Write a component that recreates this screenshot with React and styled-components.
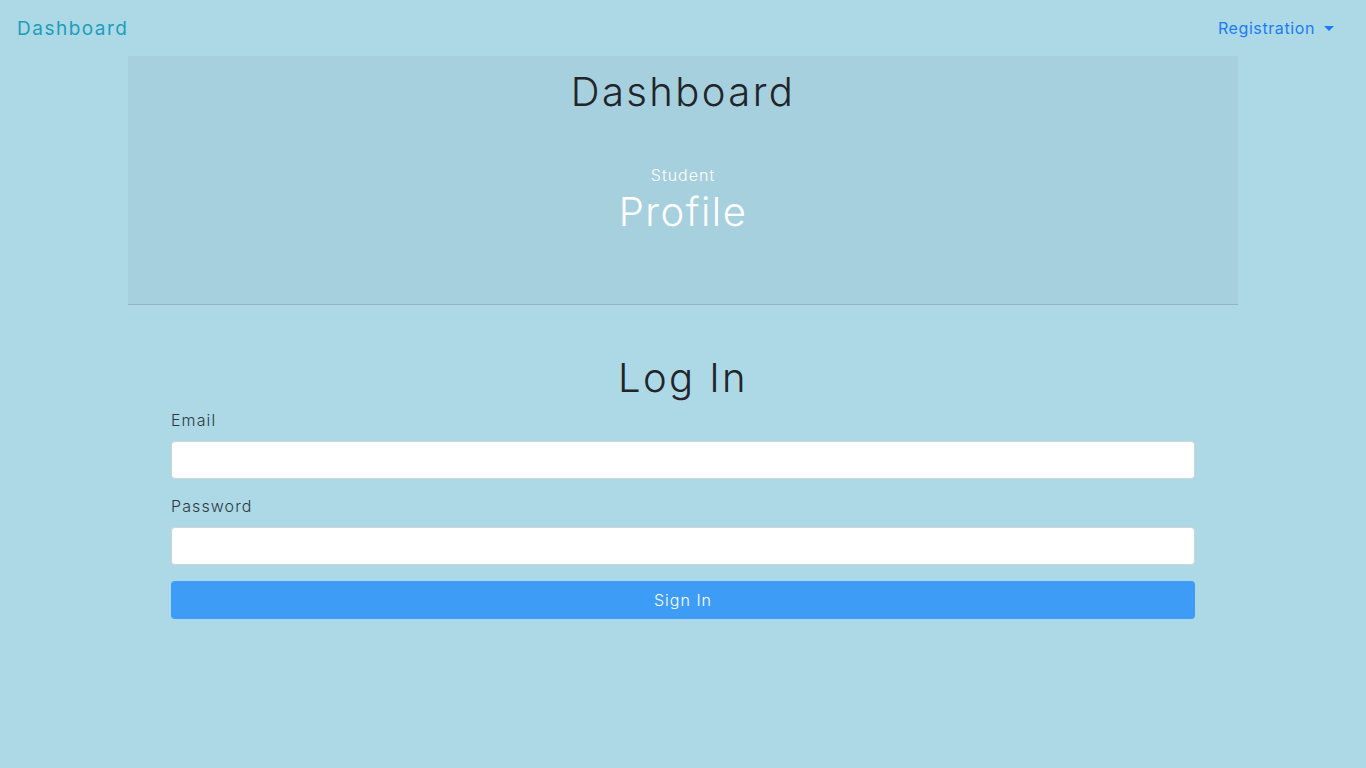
import React from "react";
import styled, { createGlobalStyle } from "styled-components";

const Global = createGlobalStyle`
  html, body { margin: 0; padding: 0; }
  body {
    background: #add8e6;
    font-family: Inter, "Open Sans", sans-serif;
    font-weight: 300;
    color: #212529;
    min-height: 768px;
  }
  * { box-sizing: border-box; }
`;

const Nav = styled.nav`
  height: 56px;
  display: flex;
  align-items: center;
  justify-content: space-between;
  padding: 0 32px 0 17px;
`;

const Brand = styled.a`
  font-size: 19px;
  font-weight: 400;
  letter-spacing: 1.5px;
  color: #1b9fba;
  text-decoration: none;
`;

const DropLink = styled.a`
  display: flex;
  align-items: center;
  gap: 9px;
  font-size: 16px;
  font-weight: 400;
  letter-spacing: 0.6px;
  color: #1a7cf5;
  text-decoration: none;
`;

const Caret = styled.span`
  width: 0;
  height: 0;
  border-left: 5px solid transparent;
  border-right: 5px solid transparent;
  border-top: 5px solid #1a7cf5;
`;

const Jumbo = styled.header`
  width: 1110px;
  margin: 0 auto;
  height: 249px;
  background: #a6d0de;
  border-bottom: 1px solid #8fb5c6;
  display: flex;
  flex-direction: column;
  align-items: center;
  padding-top: 68px;
`;

const Title = styled.h1`
  margin: 0;
  font-size: 40px;
  font-weight: 300;
  line-height: 48px;
  letter-spacing: ${p => p.$ls || "2.4px"};
  color: ${p => (p.$light ? "#ffffff" : "#212529")};
`;

const JumboTitle = styled(Title)`
  margin-top: -56px;
`;

const Sub = styled.div`
  margin-top: 49px;
  font-size: 16px;
  letter-spacing: 1px;
  color: #ffffff;
  line-height: 20px;
`;

const ProfileTitle = styled(Title)`
  margin-top: 3px;
`;

const Main = styled.main`
  width: 1024px;
  margin: 0 auto;
  padding-top: 49px;
  display: flex;
  flex-direction: column;
`;

const Center = styled(Title)`
  text-align: center;
  margin-bottom: 8px;
`;

const Label = styled.label`
  font-size: 16px;
  font-weight: 300;
  letter-spacing: 1.1px;
  color: #2c3a3f;
  line-height: 20px;
  margin-bottom: 11px;
`;

const Input = styled.input`
  height: 38px;
  width: 100%;
  border: 1px solid #ced4da;
  border-radius: 4px;
  background: #fff;
  margin-bottom: ${p => p.$mb || "17px"};
  font-size: 16px;
  padding: 6px 12px;
`;

const Button = styled.button`
  height: 38px;
  width: 100%;
  border: none;
  border-radius: 4px;
  background: #3d9cf5;
  color: #fff;
  font-family: inherit;
  font-size: 16px;
  font-weight: 300;
  letter-spacing: 1px;
`;

export default function App() {
  return (
    <>
      <Global />
      <Nav>
        <Brand href="#">Dashboard</Brand>
        <DropLink href="#">
          Registration <Caret />
        </DropLink>
      </Nav>
      <Jumbo>
        <JumboTitle>Dashboard</JumboTitle>
        <Sub>Student</Sub>
        <ProfileTitle $light $ls="1.5px">Profile</ProfileTitle>
      </Jumbo>
      <Main>
        <Center>Log In</Center>
        <Label>Email</Label>
        <Input type="email" />
        <Label>Password</Label>
        <Input type="password" $mb="16px" />
        <Button>Sign In</Button>
      </Main>
    </>
  );
}
